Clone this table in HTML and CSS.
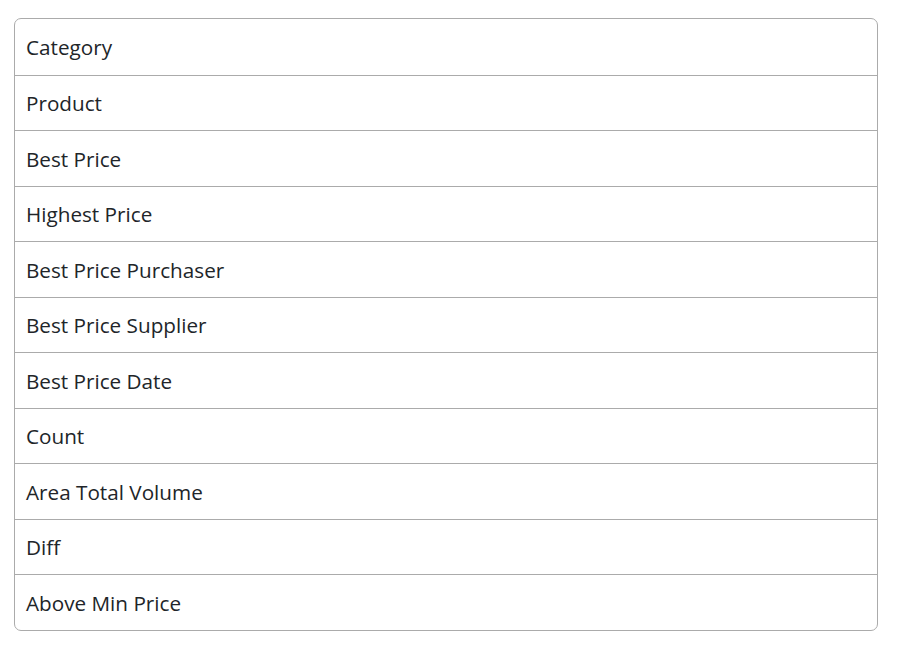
FILE: index.html
```html
<!DOCTYPE html>
<html>
<head>
<meta charset="utf-8">
<link rel="stylesheet" href="styles.css">
</head>
<body>
<ul class="list">
  <li class="item">Category</li>
  <li class="item">Product</li>
  <li class="item">Best Price</li>
  <li class="item">Highest Price</li>
  <li class="item">Best Price Purchaser</li>
  <li class="item">Best Price Supplier</li>
  <li class="item">Best Price Date</li>
  <li class="item">Count</li>
  <li class="item">Area Total Volume</li>
  <li class="item">Diff</li>
  <li class="item">Above Min Price</li>
</ul>
</body>
</html>
```
FILE: styles.css
```css
html, body {
  margin: 0;
  padding: 0;
  background: #fff;
}
body {
  padding: 18px 35px 0 14px;
  font-family: "Open Sans", "Noto Sans", sans-serif;
  color: #212529;
}
.list {
  list-style: none;
  margin: 0;
  padding: 0;
  border: 1px solid #ababab;
  border-radius: 7px;
  display: flex;
  flex-direction: column;
}
.item {
  height: 55.5px;
  box-sizing: border-box;
  padding: 1px 11px 0;
  display: flex;
  align-items: center;
  font-size: 20.7px;
  border-top: 1px solid #ababab;
}
.item:first-child {
  border-top: none;
}
```
